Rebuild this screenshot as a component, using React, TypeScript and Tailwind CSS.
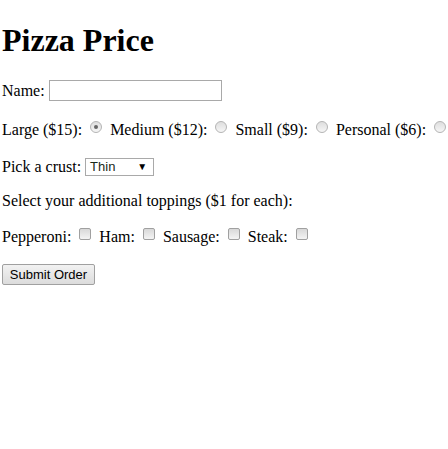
import React from "react";

function Radio({ checked = false }: { checked?: boolean }) {
  return (
    <span className="relative inline-block w-[12px] h-[12px] ml-[8px] mr-[8px] rounded-full border border-[#b4b4b4] bg-gradient-to-b from-[#dedede] to-[#f6f6f6] align-[2px]">
      {checked && (
        <span className="absolute left-[3px] top-[3px] w-[4px] h-[4px] rounded-full bg-[#666]" />
      )}
    </span>
  );
}

function Check() {
  return (
    <span className="inline-block w-[12px] h-[12px] ml-[8px] mr-[8px] rounded-[2px] border border-[#a0a0a0] bg-gradient-to-b from-[#d8d8d8] to-[#f4f4f4] align-[2px]" />
  );
}

export default function App() {
  return (
    <div className="w-[448px] h-[449px] bg-white overflow-hidden pl-[2px] text-black font-['Liberation_Serif','Times_New_Roman',serif] text-[16px]">
      <h1 className="mt-[22px] h-[37px] leading-[37px] text-[32px] font-bold">Pizza Price</h1>

      <div className="mt-[21px] h-[21px] flex items-center">
        <span>Name:</span>
        <input
          type="text"
          className="ml-[4px] w-[173px] h-[21px] border border-[#a9a9a9] bg-white outline-none"
        />
      </div>

      <div className="mt-[19px] h-[19px] leading-[19px] whitespace-nowrap">
        Large ($15):<Radio checked />Medium ($12):<Radio />Small ($9):<Radio />Personal ($6):<Radio />
      </div>

      <div className="mt-[18px] h-[19px] flex items-center">
        <span>Pick a crust:</span>
        <div className="ml-[4px] w-[69px] h-[18px] border border-[#a9a9a9] bg-white flex items-center justify-between pl-[4px] pr-[6px] font-['Liberation_Sans',Arial,sans-serif] text-[13px] text-[#1a2a1a]">
          <span>Thin</span>
          <span className="text-[10px] text-black">▼</span>
        </div>
      </div>

      <div className="mt-[16px] h-[18px] leading-[18px]">Select your additional toppings ($1 for each):</div>

      <div className="mt-[18px] h-[18px] leading-[18px] whitespace-nowrap">
        Pepperoni:<Check />Ham:<Check />Sausage:<Check />Steak:<Check />
      </div>

      <button className="mt-[18px] w-[93px] h-[21px] border border-[#a0a0a0] rounded-[2px] bg-gradient-to-b from-[#f2f2f2] to-[#dcdcdc] font-['Liberation_Sans',Arial,sans-serif] text-[13px] text-black">
        Submit Order
      </button>
    </div>
  );
}
